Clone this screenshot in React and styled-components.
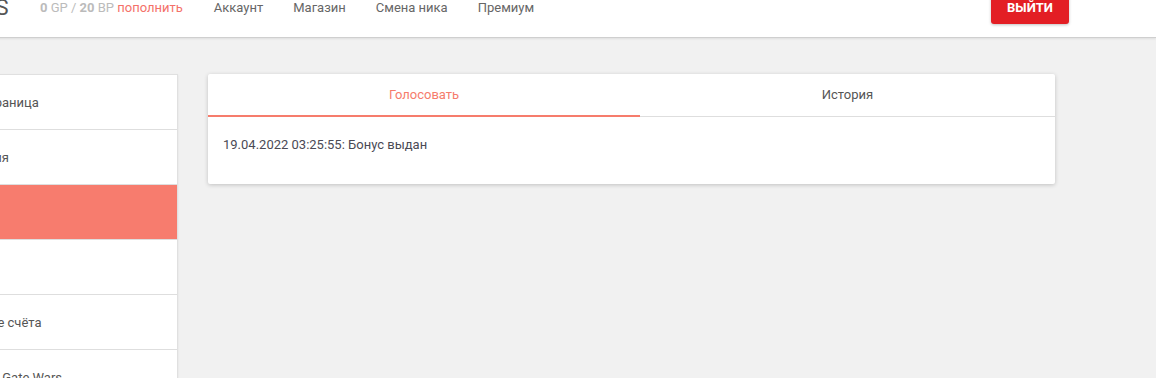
import React from 'react'
import styled, { createGlobalStyle } from 'styled-components'

const GlobalStyle = createGlobalStyle`
    html, body {
        margin:0;
        padding:0;
        background:#f1f1f1;
        overflow:hidden;
    }
    body {
        font-family: Roboto, "Liberation Sans", sans-serif;
    }
`

const menu = [
    'Главная страница',
    'Информация',
    'Голосовать',
    'Магазин',
    'Пополнение счёта',
    'Статистика Gate Wars',
]

function App() {
    return (
        <Page>
            <GlobalStyle />
            <Header>
                <Logo>GATEWARS</Logo>
                <Balance>
                    <b>0</b> GP / <b>20</b> BP <Refill>пополнить</Refill>
                </Balance>
                <Nav>
                    <NavLink>Аккаунт</NavLink>
                    <NavLink>Магазин</NavLink>
                    <NavLink>Смена ника</NavLink>
                    <NavLink>Премиум</NavLink>
                </Nav>
                <LogoutButton>ВЫЙТИ</LogoutButton>
            </Header>
            <Body>
                <Sidebar>
                    {menu.map((item, i) => (
                        <SideItem key={item} $active={i === 2}>{item}</SideItem>
                    ))}
                </Sidebar>
                <Card>
                    <Tabs>
                        <Tab $active $width="432px">Голосовать</Tab>
                        <Tab>История</Tab>
                    </Tabs>
                    <CardContent>
                        19.04.2022 03:25:55: Бонус выдан
                    </CardContent>
                </Card>
            </Body>
        </Page>
    )
}

export default App

const Page = styled.div`
    margin-top:-22px;
    margin-left:-100px;
    width:1256px;
`

const Header = styled.div`
    height:60px;
    background:#fff;
    display:flex;
    align-items:center;
    padding-right:87px;
    box-sizing:border-box;
    border-bottom:1px solid #cfcfcf;
    box-shadow:0 1px 2px rgba(0,0,0,0.08);
`

const Logo = styled.div`
    width:109px;
    text-align:right;
    font-size:22px;
    color:#555;
    letter-spacing:0.5px;
    white-space:nowrap;
    overflow:hidden;
    direction:rtl;
`

const Balance = styled.div`
    margin-left:31px;
    font-size:13px;
    color:#bbb;
    b {
        font-weight:700;
    }
`

const Refill = styled.span`
    color:#f4716a;
`

const Nav = styled.div`
    display:flex;
    gap:30px;
    margin-left:31px;
`

const NavLink = styled.div`
    font-size:13px;
    color:#666;
`

const LogoutButton = styled.div`
    margin-left:auto;
    width:78px;
    height:32px;
    display:flex;
    align-items:center;
    justify-content:center;
    background:#e31e24;
    color:#fff;
    font-size:13px;
    font-weight:700;
    border-radius:3px;
    box-shadow:0 1px 3px rgba(0,0,0,0.25);
`

const Body = styled.div`
    display:flex;
    align-items:flex-start;
    gap:30px;
    margin-top:36px;
`

const Sidebar = styled.div`
    width:276px;
    background:#fff;
    border:1px solid #e0e0e0;
    box-shadow:0 1px 2px rgba(0,0,0,0.08);
`

const SideItem = styled.div`
    height:54px;
    display:flex;
    align-items:center;
    padding-left:28px;
    font-size:13px;
    white-space:nowrap;
    color:${p => (p.$active ? '#fff' : '#555')};
    background:${p => (p.$active ? '#f77c6e' : '#fff')};
    border-bottom:1px solid #dedede;
`

const Card = styled.div`
    width:847px;
    background:#fff;
    border-radius:2px;
    box-shadow:0 1px 4px rgba(0,0,0,0.2);
`

const Tabs = styled.div`
    display:flex;
    border-bottom:1px solid #dedede;
`

const Tab = styled.div`
    flex:${p => (p.$width ? `0 0 ${p.$width}` : '1')};
    height:43px;
    display:flex;
    align-items:center;
    justify-content:center;
    font-size:13px;
    color:${p => (p.$active ? '#f67c6c' : '#555')};
    box-sizing:border-box;
    border-bottom:2px solid ${p => (p.$active ? '#f67c6c' : 'transparent')};
    margin-bottom:-1px;
`

const CardContent = styled.div`
    padding:18px 15px 29px;
    font-size:13px;
    color:#4a4a55;
    line-height:20px;
`
